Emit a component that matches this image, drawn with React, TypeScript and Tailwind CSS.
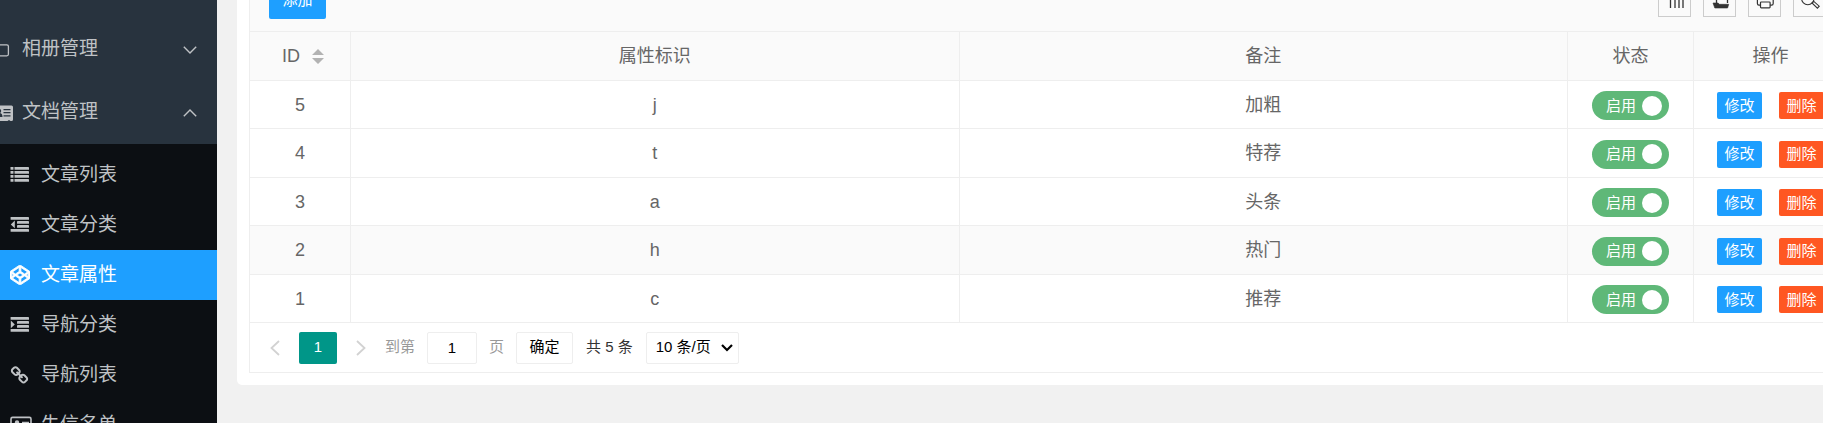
import React, { useState } from "react";
import { FaCodepen } from "react-icons/fa";

type Attribute = { id: number; flag: string; remark: string };

const ROWS: Attribute[] = [
  { id: 5, flag: "j", remark: "加粗" },
  { id: 4, flag: "t", remark: "特荐" },
  { id: 3, flag: "a", remark: "头条" },
  { id: 2, flag: "h", remark: "热门" },
  { id: 1, flag: "c", remark: "推荐" },
];

function ListIcon() {
  return (
    <svg viewBox="0 0 20 20" className="size-5" fill="currentColor" aria-hidden="true">
      {[2, 6, 10, 14].map((y) => (
        <g key={y}>
          <rect x="0.5" y={y} width="3" height="2.8" rx="0.4" />
          <rect x="4.5" y={y} width="14.5" height="2.8" rx="0.4" />
        </g>
      ))}
    </svg>
  );
}

function IndentIcon({ outward }: { outward?: boolean }) {
  return (
    <svg viewBox="0 0 20 20" className="size-5" fill="currentColor" aria-hidden="true">
      <rect x="0.6" y="2" width="18.4" height="2.8" rx="0.4" />
      <rect x="7" y="6" width="12" height="2.8" rx="0.4" />
      <rect x="7" y="10" width="12" height="2.8" rx="0.4" />
      <rect x="0.6" y="14" width="18.4" height="2.8" rx="0.4" />
      <path d={outward ? "M4.8 5.6v7.6L0.8 9.4z" : "M0.8 5.6v7.6L4.8 9.4z"} />
    </svg>
  );
}

function ChainIcon() {
  return (
    <svg viewBox="0 0 1792 1792" className="size-[19px]" fill="currentColor" aria-hidden="true">
      <path d="M1520 1216q0-40-28-68l-208-208q-28-28-68-28-42 0-72 32 3 3 19 18.5t21.5 21.5 15 19 13 25.5 3.5 27.5q0 40-28 68t-68 28q-15 0-27.5-3.5t-25.5-13-19-15-21.5-21.5-18.5-19q-33 31-33 73 0 40 28 68l206 207q27 27 68 27 40 0 68-26l147-146q28-28 28-67zm-703-705q0-40-28-68l-206-207q-28-28-68-28-39 0-68 27l-147 146q-28 28-28 67 0 40 28 68l208 208q27 27 68 27 42 0 72-31-3-3-19-18.5t-21.5-21.5-15-19-13-25.5-3.5-27.5q0-40 28-68t68-28q15 0 27.5 3.5t25.5 13 19 15 21.5 21.5 18.5 19q33-31 33-73zm895 705q0 120-85 203l-147 146q-83 83-203 83-121 0-204-85l-206-207q-83-83-83-203 0-123 88-209l-88-88q-86 88-208 88-120 0-204-84l-208-208q-84-84-84-204t85-203l147-146q83-83 203-83 121 0 204 85l206 207q83 83 83 203 0 123-88 209l88 88q86-88 208-88 120 0 204 84l208 208q84 84 84 204z" />
    </svg>
  );
}

function CardIcon() {
  return (
    <svg viewBox="0 0 22 20" className="h-5 w-[22px]" fill="none" stroke="currentColor" aria-hidden="true">
      <rect x="1" y="2.4" width="20" height="15" rx="1.6" strokeWidth="1.600" />
      <circle cx="7" cy="7.4" r="2.2" fill="currentColor" stroke="none" />
      <path d="M3.6 14q0-4 3.4-4t3.400 4z" fill="currentColor" stroke="none" />
      <path d="M12 7.400h7M12 10.400h7M12 13.400h4" strokeWidth="1.300" />
    </svg>
  );
}

function AlbumIcon() {
  return (
    <svg viewBox="0 0 22 20" className="h-5 w-[22px]" fill="none" stroke="currentColor" aria-hidden="true">
      <rect x="1" y="4.800" width="16.400" height="11" rx="1.500" strokeWidth="1.300" />
    </svg>
  );
}

function DocIcon() {
  return (
    <svg viewBox="0 0 22 20" className="h-5 w-[22px]" aria-hidden="true">
      <path
        fill="currentColor"
        d="M3.5 2.5h17q1.5 0 1.5 1.5v12.5q0 1.5-1.5 1.5h-1l-1.5-1-1.5 1h-8l-1.5-1-1.5 1h-2Q2 18 2 16.5V4q0-1.500 1.500-1.500z"
      />
      <path d="M12.500 6.600h7M12.500 9.700h7M12.500 12.800h7" stroke="#28333e" strokeWidth="1.300" />
      <circle cx="8" cy="8" r="2.200" fill="#28333e" />
      <path d="M4.500 14q0-4 3.500-4t3.500 4z" fill="#28333e" />
    </svg>
  );
}

function Chevron({ up }: { up?: boolean }) {
  return (
    <svg viewBox="0 0 14 8" className="h-2 w-3.5" fill="none" stroke="currentColor" strokeWidth="1.400" aria-hidden="true">
      <path d={up ? "M0.800 7.200 7 1l6.200 6.200" : "M0.800 0.800 7 7l6.200-6.200"} />
    </svg>
  );
}

const SUB_ITEMS = [
  { label: "文章列表", icon: <ListIcon /> },
  { label: "文章分类", icon: <IndentIcon outward /> },
  {
    label: "文章属性",
    icon: <FaCodepen className="size-5" stroke="currentColor" strokeWidth="20" aria-hidden="true" />,
    active: true,
  },
  { label: "导航分类", icon: <IndentIcon /> },
  { label: "导航列表", icon: <ChainIcon /> },
  { label: "失信名单", icon: <CardIcon /> },
];

function ParentItem({ label, icon, open }: { label: string; icon: React.ReactNode; open?: boolean }) {
  return (
    <button
      type="button"
      aria-expanded={!!open}
      className="-ml-[9px] flex h-[63px] shrink-0 items-center gap-[9px] pr-5"
    >
      {icon}
      <span className="flex-1 text-left">{label}</span>
      <Chevron up={open} />
    </button>
  );
}

function Sidebar() {
  return (
    <nav className="flex w-[217px] shrink-0 flex-col bg-[#28333e] pt-[18px] text-[19px] text-[#bfc2c5]">
      <ParentItem label="相册管理" icon={<AlbumIcon />} />
      <ParentItem label="文档管理" icon={<DocIcon />} open />
      <ul className="flex-1 bg-[#0c0f13] py-1.5">
        {SUB_ITEMS.map((item) => (
          <li key={item.label}>
            <a
              href="#"
              className={
                item.active
                  ? "flex h-[50px] items-center bg-[#1e9fff] pl-2.5 text-white"
                  : "flex h-[50px] items-center pl-2.5"
              }
            >
              <span className="w-[31px]">{item.icon}</span>
              {item.label}
            </a>
          </li>
        ))}
      </ul>
    </nav>
  );
}

const TOOLS = [
  {
    label: "筛选列",
    drawing: <path d="M5.500 2v16M10 2v16M14 2v16M18 2v16" strokeWidth="1.300" />,
  },
  {
    label: "导出",
    drawing: (
      <>
        <path d="M6.500 13V4h7l4 4v5" strokeWidth="1.300" />
        <path d="M3 13h5l1.500 1.300h9.200L17.600 18H4.800z" fill="currentColor" strokeWidth="0.600" />
      </>
    ),
  },
  {
    label: "打印",
    drawing: (
      <>
        <path
          d="M5.500 7V2h9v5M5.500 15.200H4q-1.600 0-1.600-1.600V8.600Q2.400 7 4 7h12.600q1.600 0 1.600 1.600v5q0 1.600-1.600 1.600h-1.500"
          strokeWidth="1.200"
        />
        <rect x="5.500" y="12" width="9.600" height="5.800" rx="0.800" strokeWidth="1.200" />
      </>
    ),
  },
  {
    label: "搜索",
    drawing: (
      <>
        <circle cx="7.800" cy="8.500" r="6.200" strokeWidth="1.100" />
        <path d="m12 13 1.800-1.600 5.400 4.800-1.800 1.900z" strokeWidth="1.100" />
      </>
    ),
  },
];

function Toolbar() {
  return (
    <div className="flex h-[63px] items-center justify-between border-b border-[#eeeeee] bg-[#fafafa] pr-[21px] pl-[19px]">
      <button type="button" className="h-[38px] w-[57px] rounded-xs bg-[#1e9fff] text-[15px] text-white">
        添加
      </button>
      <div className="flex gap-3">
        {TOOLS.map((t) => (
          <button
            key={t.label}
            type="button"
            aria-label={t.label}
            className="flex size-[33px] items-center justify-center border border-[#cccccc] text-[#333333]"
          >
            <svg viewBox="0 0 20 20" className="size-5" fill="none" stroke="currentColor" aria-hidden="true">
              {t.drawing}
            </svg>
          </button>
        ))}
      </div>
    </div>
  );
}

function StatusSwitch({ id }: { id: number }) {
  const [on, setOn] = useState(true);
  return (
    <label
      className={
        on
          ? "mx-auto flex h-[29px] w-[77px] cursor-pointer items-center justify-between rounded-full bg-[#5fb878] pr-[7px] pl-[14px] text-[15px] text-white"
          : "mx-auto flex h-[29px] w-[77px] cursor-pointer flex-row-reverse items-center justify-between rounded-full bg-[#d2d2d2] pr-[14px] pl-[7px] text-[15px] text-white"
      }
    >
      <input
        type="checkbox"
        name={"status-" + id}
        checked={on}
        onChange={(e) => setOn(e.target.checked)}
        className="sr-only"
      />
      {on ? "启用" : "禁用"}
      <span className="size-5 rounded-full bg-white" />
    </label>
  );
}

const CELL = "border-b border-r border-[#eeeeee] p-0 font-normal";
const CONTROL_CELL = "border-b border-r border-[#eeeeee] p-0 pt-0.5 font-normal";
const LAST = "border-b border-[#eeeeee] p-0 font-normal";
const CONTROL_LAST = "border-b border-[#eeeeee] p-0 pt-0.5 font-normal";

function AttributeTable() {
  return (
    <table className="w-full table-fixed border-separate border-spacing-0 text-center text-[18px] leading-6 text-[#666666]">
      <colgroup>
        <col className="w-[101px]" />
        <col />
        <col />
        <col className="w-[126px]" />
        <col className="w-[153px]" />
      </colgroup>
      <thead>
        <tr className="h-[49px] bg-[#fafafa]">
          <th className={CELL}>
            <button type="button" className="inline-flex items-center gap-3 pl-1.5">
              ID
              <svg viewBox="0 0 12 15" className="h-[15px] w-3" fill="#b2b2b2" aria-hidden="true">
                <path d="M6 0l6 6H0zM6 15l6-6H0z" />
              </svg>
            </button>
          </th>
          <th className={CELL}>属性标识</th>
          <th className={CELL}>备注</th>
          <th className={CELL}>状态</th>
          <th className={LAST}>操作</th>
        </tr>
      </thead>
      <tbody>
        {ROWS.map((r) => (
          <tr key={r.id} className={r.id === 2 ? "bg-[#fafafa] odd:h-[48px] even:h-[49px]" : "odd:h-[48px] even:h-[49px]"}>
            <td className={CELL}>{r.id}</td>
            <td className={CELL}>{r.flag}</td>
            <td className={CELL}>{r.remark}</td>
            <td className={CONTROL_CELL}>
              <StatusSwitch id={r.id} />
            </td>
            <td className={CONTROL_LAST}>
              <div className="flex justify-center gap-[17px] text-[15px] text-white">
                <button type="button" className="h-[27px] w-[45px] rounded-xs bg-[#1e9fff]">
                  修改
                </button>
                <button type="button" className="h-[27px] w-[45px] rounded-xs bg-[#ff5722]">
                  删除
                </button>
              </div>
            </td>
          </tr>
        ))}
      </tbody>
    </table>
  );
}

function PageArrow({ next }: { next?: boolean }) {
  return (
    <button type="button" disabled aria-label={next ? "下一页" : "上一页"} className="text-[#d2d2d2]">
      <svg viewBox="0 0 10 16" className="h-4 w-2.5" fill="none" stroke="currentColor" strokeWidth="1.800" aria-hidden="true">
        <path d={next ? "M1 1l7.500 7L1 15" : "M9 1 1.500 8 9 15"} />
      </svg>
    </button>
  );
}

function Pagination() {
  const [page, setPage] = useState("1");
  return (
    <div className="flex h-[49px] items-center pl-5 text-[15px] text-[#333333]">
      <div className="flex items-center gap-[19px]">
        <PageArrow />
        <button type="button" aria-current="page" className="h-8 w-[38px] rounded-xs bg-[#009688] text-white">
          1
        </button>
        <PageArrow next />
      </div>
      <div className="ml-[19px] flex items-center gap-3 text-[#999999]">
        <label htmlFor="goto-page">到第</label>
        <input
          id="goto-page"
          value={page}
          onChange={(e) => setPage(e.target.value)}
          className="h-8 w-[50px] rounded-xs border border-[#eeeeee] bg-white text-center text-black"
        />
        <span>页</span>
        <button type="button" className="h-8 w-[57px] rounded-xs border border-[#eeeeee] bg-white text-black">
          确定
        </button>
        <span className="px-px text-[#333333]">共 5 条</span>
        <div className="relative">
          <select
            aria-label="每页条数"
            className="h-8 w-[93px] appearance-none rounded-xs border border-[#eeeeee] bg-white pl-[9px] text-black"
          >
            <option>10 条/页</option>
            <option>20 条/页</option>
            <option>50 条/页</option>
          </select>
          <svg
            viewBox="0 0 12 8"
            className="pointer-events-none absolute top-3 right-1.5 h-2 w-3"
            fill="none"
            stroke="#000000"
            strokeWidth="2.200"
            aria-hidden="true"
          >
            <path d="M1 1l5 5 5-5" />
          </svg>
        </div>
      </div>
    </div>
  );
}

export default function App() {
  return (
    <div className="flex h-screen overflow-hidden bg-[#f1f1f1] font-['Liberation_Sans','Noto_Sans_CJK_SC',sans-serif]">
      <Sidebar />
      <main className="min-w-0 flex-1 overflow-hidden">
        <div className="-mt-11 -mr-[37px] ml-5 rounded-[5px] bg-white p-3">
          <div className="border border-[#eeeeee]">
            <Toolbar />
            <AttributeTable />
            <Pagination />
          </div>
        </div>
      </main>
    </div>
  );
}
